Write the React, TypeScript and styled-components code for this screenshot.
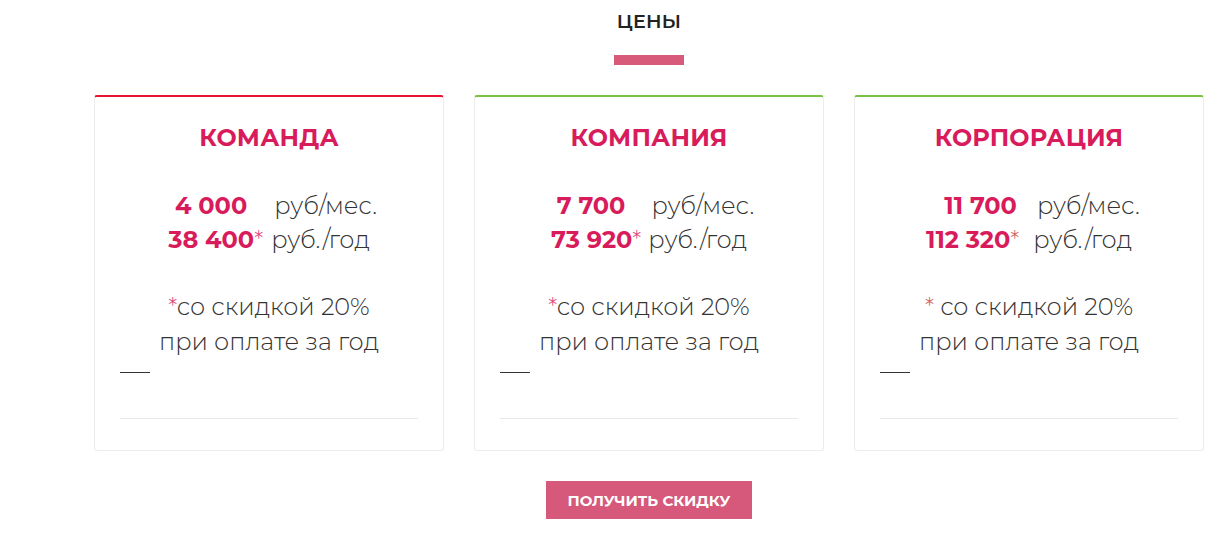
import styled, { createGlobalStyle } from 'styled-components'

const GlobalStyle = createGlobalStyle`
  html, body {
    margin: 0;
    padding: 0;
    background: #fff;
  }
  body {
    font-family: Montserrat, "Open Sans", "Noto Sans", sans-serif;
    color: #333;
  }
`

const Section = styled.section`
  width: 1110px;
  margin-left: 94px;
  padding-top: 9px;
  display: flex;
  flex-direction: column;
  align-items: center;
`

const Heading = styled.h2`
  margin: 0;
  font-size: 19px;
  line-height: 26px;
  font-weight: 600;
  letter-spacing: 0.3px;
  color: #222;
`

const Accent = styled.div`
  width: 70px;
  height: 10px;
  margin-top: 20px;
  background: #d85a7b;
`

const Cards = styled.div`
  display: grid;
  grid-template-columns: repeat(3, 350px);
  gap: 30px;
  margin-top: 30px;
`

const Card = styled.div<{ $top: string }>`
  box-sizing: border-box;
  border: 1px solid #ececec;
  border-top: 2px solid ${p => p.$top};
  border-radius: 3px;
  padding: 26px 25px 31px;
  display: flex;
  flex-direction: column;
`

const PlanName = styled.h3`
  margin: 0;
  text-align: center;
  font-size: 24px;
  line-height: 30px;
  font-weight: 700;
  color: #d81b5b;
  letter-spacing: 0.2px;
`

const Prices = styled.div`
  margin-top: 36px;
  display: flex;
  flex-direction: column;
`

const PriceRow = styled.div<{ $offset?: number }>`
  display: flex;
  justify-content: center;
  align-items: baseline;
  padding-left: ${p => p.$offset ?? 0}px;
  line-height: 34px;
  font-size: 24px;
`

const Amount = styled.span`
  font-weight: 700;
  color: #d81b5b;
`

const Star = styled.span<{ $color?: string }>`
  font-weight: 300;
  color: ${p => p.$color ?? '#e0457a'};
`

const Unit = styled.span<{ $gap: number }>`
  margin-left: ${p => p.$gap}px;
  font-weight: 300;
  color: #333;
`

const Note = styled.p`
  margin: 32px 0 0;
  text-align: center;
  font-size: 24px;
  line-height: 35px;
  font-weight: 300;
  color: #333;
`

const Dash = styled.div`
  width: 30px;
  height: 1px;
  margin-top: 13px;
  background: #333;
`

const Rule = styled.hr`
  margin: 45px 0 0;
  border: 0;
  border-top: 1px solid #e8e8e8;
`

const CtaButton = styled.button`
  margin-top: 30px;
  width: 206px;
  height: 38px;
  border: none;
  border-radius: 0;
  background: #d6587a;
  color: #fff;
  font-family: inherit;
  font-size: 15px;
  font-weight: 700;
  text-transform: uppercase;
  cursor: pointer;
`

type Plan = {
  name: string
  top: string
  month: string
  year: string
  monthGap: number
  monthOffset: number
  yearGap: number
  starColor?: string
  notePrefix: string
}

const plans: Plan[] = [
  { name: 'Команда', top: '#e8132e', month: '4 000', year: '38 400', monthGap: 27, monthOffset: 14, yearGap: 8, notePrefix: '' },
  { name: 'Компания', top: '#7cc242', month: '7 700', year: '73 920', monthGap: 26, monthOffset: 13, yearGap: 7, notePrefix: '' },
  { name: 'Корпорация', top: '#7cc242', month: '11 700', year: '112 320', monthGap: 20, monthOffset: 26, yearGap: 14, starColor: '#d0605a', notePrefix: ' ' },
]

export default function App() {
  return (
    <>
      <GlobalStyle />
      <Section>
        <Heading>ЦЕНЫ</Heading>
        <Accent />
        <Cards>
          {plans.map(p => (
            <Card key={p.name} $top={p.top}>
              <PlanName>{p.name.toUpperCase()}</PlanName>
              <Prices>
                <PriceRow $offset={p.monthOffset}>
                  <Amount>{p.month}</Amount>
                  <Unit $gap={p.monthGap}>руб/мес.</Unit>
                </PriceRow>
                <PriceRow>
                  <Amount>{p.year}</Amount>
                  <Star $color={p.starColor}>*</Star>
                  <Unit $gap={p.yearGap}>руб./год</Unit>
                </PriceRow>
              </Prices>
              <Note>
                <Star $color={p.starColor}>*</Star>{p.notePrefix}со скидкой 20%
                <br />
                при оплате за год
              </Note>
              <Dash />
              <Rule />
            </Card>
          ))}
        </Cards>
        <CtaButton>Получить скидку</CtaButton>
      </Section>
    </>
  )
}
